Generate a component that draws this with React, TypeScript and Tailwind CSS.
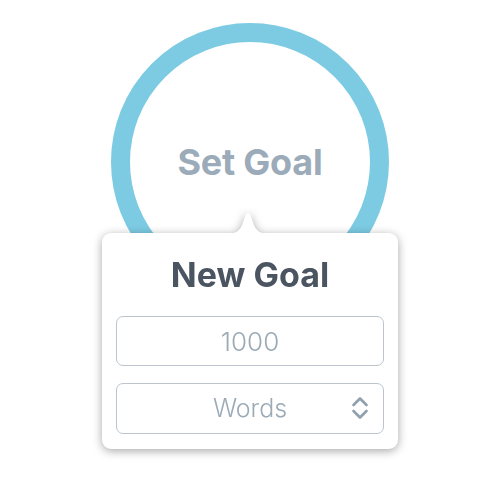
import React from 'react';

const ChevronUpDown: React.FC = () => (
    <svg width="18" height="26" viewBox="0 0 18 26" fill="none" stroke="#8fa0ae" strokeWidth="2.6" strokeLinecap="round" strokeLinejoin="round">
        <path d="M2.5 10 L9 3.5 L15.5 10" />
        <path d="M2.5 16 L9 22.5 L15.5 16" />
    </svg>
);

const App: React.FC = () => {
    return (
        <div className="relative w-[500px] h-[500px] bg-white overflow-hidden" style={{ fontFamily: 'Inter, "Noto Sans", sans-serif' }}>
            {/* Goal ring */}
            <div className="pt-[23px] flex justify-center">
                <div className="w-[278px] h-[278px] rounded-full border-[19px] border-[#7ccbe3] flex items-center justify-center">
                    <span className="text-[36px] font-bold text-[#9babb9] tracking-[-0.2px] leading-none">Set Goal</span>
                </div>
            </div>

            {/* Popover */}
            <div className="absolute left-[102px] top-[212px] w-[296px] drop-shadow-[0_2px_5px_rgba(0,0,0,0.35)]">
                <div className="flex justify-center">
                    <svg width="50" height="22" viewBox="0 0 50 22" className="-mb-px ml-[-4px]">
                        <path d="M0 22 C12 22 16 20 19 13 L22.5 3 Q25 -1 27.5 3 L31 13 C34 20 38 22 50 22 Z" fill="#ffffff" />
                    </svg>
                </div>
                <div className="bg-white rounded-[9px] h-[216px] px-[14px] pt-[22px] flex flex-col">
                    <div className="text-center text-[34px] leading-[40px] font-bold text-[#4b5561]">New Goal</div>
                    <div className="mt-[21px] h-[50px] rounded-[7px] border border-[#bcc5cd] flex items-center justify-center">
                        <span className="text-[26px] text-[#9aaab7] font-light">1000</span>
                    </div>
                    <div className="mt-[17px] h-[51px] rounded-[7px] border border-[#bcc5cd] relative flex items-center justify-center">
                        <span className="text-[25px] text-[#9aaab7] font-light">Words</span>
                        <div className="absolute right-[14px] top-[11px]">
                            <ChevronUpDown />
                        </div>
                    </div>
                </div>
            </div>
        </div>
    );
};

export default App;
